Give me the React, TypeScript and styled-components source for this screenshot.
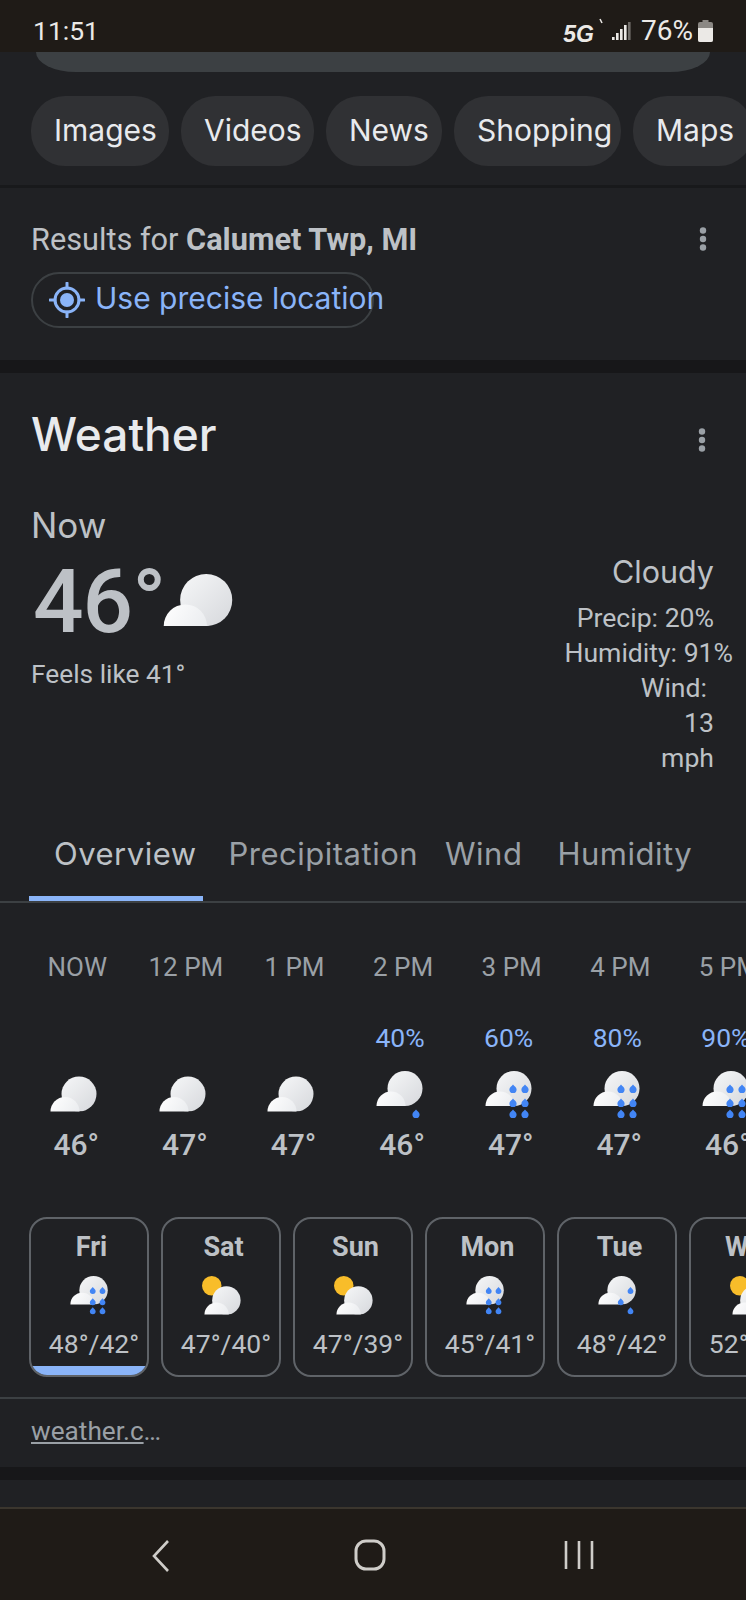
import styled, { createGlobalStyle } from 'styled-components';

type IconKind = 'cloudy' | 'drizzle' | 'showers' | 'rain' | 'partly';

type Hour = { label: string; chance?: string; icon: IconKind; temp: string };
type Day = { name: string; icon: IconKind; temps: string; active?: boolean };

const hours: Hour[] = [
  { label: 'NOW', icon: 'cloudy', temp: '46°' },
  { label: '12 PM', icon: 'cloudy', temp: '47°' },
  { label: '1 PM', icon: 'cloudy', temp: '47°' },
  { label: '2 PM', chance: '40%', icon: 'drizzle', temp: '46°' },
  { label: '3 PM', chance: '60%', icon: 'rain', temp: '47°' },
  { label: '4 PM', chance: '80%', icon: 'rain', temp: '47°' },
  { label: '5 PM', chance: '90%', icon: 'rain', temp: '46°' },
];

const days: Day[] = [
  { name: 'Fri', icon: 'rain', temps: '48°/42°', active: true },
  { name: 'Sat', icon: 'partly', temps: '47°/40°' },
  { name: 'Sun', icon: 'partly', temps: '47°/39°' },
  { name: 'Mon', icon: 'rain', temps: '45°/41°' },
  { name: 'Tue', icon: 'showers', temps: '48°/42°' },
  { name: 'Wed', icon: 'partly', temps: '52°/43°' },
];

const chips = [
  { label: 'Images', width: 138 },
  { label: 'Videos', width: 133 },
  { label: 'News', width: 116 },
  { label: 'Shopping', width: 167 },
  { label: 'Maps', width: 120 },
];

const tabs = [
  { label: 'Overview', gap: 32 },
  { label: 'Precipitation', gap: 27 },
  { label: 'Wind', gap: 35 },
  { label: 'Humidity', gap: 0 },
];

const DISPLAY = '"Inter", "Noto Sans", sans-serif';
const BODY = 'Roboto, "Liberation Sans", sans-serif';

const GlobalStyle = createGlobalStyle`
  html, body {
    margin: 0;
    padding: 0;
    background: #202124;
  }
`;

const Screen = styled.div`
  width: 746px;
  height: 1600px;
  display: flex;
  flex-direction: column;
  overflow: hidden;
  background: #202124;
  font-family: ${BODY};
  color: #bdc1c6;
`;

const StatusBar = styled.div`
  flex: 0 0 52px;
  display: flex;
  align-items: center;
  justify-content: space-between;
  padding: 9px 33px 0 33px;
  box-sizing: border-box;
  background: #1f1b17;
  color: #ebe9e6;
  font-size: 26.5px;
`;

const StatusRight = styled.div`
  display: flex;
  align-items: center;
`;

const FiveG = styled.span`
  font-family: 'Liberation Sans', sans-serif;
  font-weight: 700;
  font-style: italic;
  font-size: 23px;
  margin-right: -3px;
  padding-top: 8px;
`;

const Percent = styled.span`
  margin: 0 5px 0 10px;
  font-size: 28px;
`;

const SearchStub = styled.div`
  height: 20px;
  margin: 0 36px;
  background: #3c4043;
  border-radius: 0 0 40px 40px / 0 0 20px 20px;
`;

const ChipRow = styled.div`
  display: flex;
  gap: 12px;
  padding: 24px 0 19px 31px;
  border-bottom: 3px solid #18191b;
`;

const Chip = styled.div<{ $width: number }>`
  flex: 0 0 ${(p) => p.$width}px;
  height: 70px;
  display: flex;
  align-items: center;
  padding: 0 0 3px 23px;
  box-sizing: border-box;
  background: #303134;
  border-radius: 34px;
  color: #e8eaed;
  font-family: ${DISPLAY};
  font-size: 30px;
`;

const ResultsSection = styled.section`
  height: 172px;
  padding: 33px 31px 0;
  box-sizing: border-box;
`;

const ResultsRow = styled.div`
  display: flex;
  align-items: center;
  justify-content: space-between;
  height: 36px;
  font-size: 30.7px;
  padding-right: 7px;
`;

const Strong = styled.b`
  font-weight: 700;
`;

const LocationPill = styled.div`
  width: 343px;
  height: 56px;
  margin-top: 15px;
  display: flex;
  align-items: center;
  gap: 10px;
  padding: 0 0 5px 16px;
  box-sizing: border-box;
  border: 2px solid #3c4043;
  border-radius: 28px;
  color: #8ab4f8;
  font-family: ${DISPLAY};
  font-size: 30px;
  white-space: nowrap;
`;

const Band = styled.div`
  flex: 0 0 13px;
  background: #171719;
`;

const WeatherCard = styled.section`
  flex: 0 0 1094px;
  padding-top: 33px;
  box-sizing: border-box;
`;

const TitleRow = styled.div`
  display: flex;
  align-items: flex-start;
  justify-content: space-between;
  padding: 0 39px 0 31px;
`;

const Title = styled.h1`
  margin: 0;
  font-family: ${DISPLAY};
  font-weight: 500;
  font-size: 46px;
  line-height: 56px;
  color: #e8eaed;
`;

const TitleMenu = styled.div`
  padding-top: 22px;
`;

const NowLabel = styled.div`
  margin: 43px 0 6px 31px;
  font-family: ${DISPLAY};
  font-size: 35px;
  line-height: 40px;
`;

const Hero = styled.div`
  display: flex;
  justify-content: space-between;
  padding: 0 32px 0 31px;
`;

const TempRow = styled.div`
  display: flex;
  align-items: flex-start;
  height: 100px;
`;

const BigTemp = styled.span`
  font-weight: 500;
  font-size: 89px;
  line-height: 102px;
  letter-spacing: -1px;
  padding-left: 2px;
  color: #bdc1c6;
`;

const HeroIcon = styled.div`
  margin: 22px 0 0 -2px;
`;

const FeelsLike = styled.div`
  margin-top: 6px;
  font-size: 26.3px;
  line-height: 34px;
`;

const Conditions = styled.div`
  display: flex;
  flex-direction: column;
  align-items: flex-end;
  padding-top: 1px;
`;

const ConditionTitle = styled.div`
  font-family: ${DISPLAY};
  font-size: 30.5px;
  line-height: 40px;
  margin-bottom: 8px;
`;

const ConditionLine = styled.div<{ $shift?: number }>`
  font-size: 26.6px;
  line-height: 35px;
  white-space: nowrap;
  margin-right: ${(p) => p.$shift ?? 0}px;
`;

const TabRow = styled.div`
  display: flex;
  height: 67px;
  margin-top: 59px;
  padding-left: 54px;
  border-bottom: 2px solid #3c4043;
`;

const Tab = styled.div<{ $active?: boolean; $gap: number }>`
  position: relative;
  margin-right: ${(p) => p.$gap}px;
  font-family: ${DISPLAY};
  font-size: 31px;
  letter-spacing: 0.5px;
  line-height: 40px;
  white-space: nowrap;
  color: ${(p) => (p.$active ? '#bdc1c6' : '#9aa0a6')};
`;

const TabMarker = styled.div`
  position: absolute;
  left: -25px;
  width: 174px;
  top: 62px;
  height: 5px;
  background: #8ab4f8;
`;

const HourRow = styled.div`
  display: flex;
  padding: 48px 0 0 23px;
`;

const HourCol = styled.div`
  flex: 0 0 108.6px;
  display: flex;
  flex-direction: column;
  align-items: center;
`;

const HourLabel = styled.div`
  font-size: 26px;
  line-height: 32px;
  white-space: nowrap;
  color: #9aa0a6;
`;

const Chance = styled.div`
  height: 32px;
  margin: 39px 6px 17px 0;
  font-size: 26.5px;
  line-height: 32px;
  color: #8ab4f8;
`;

const HourIcon = styled.div`
  height: 48px;
  margin-right: 6px;
`;

const HourTemp = styled.div`
  margin: 8px 2px 0 0;
  font-size: 30px;
  font-weight: 500;
  line-height: 36px;
`;

const DayRow = styled.div`
  display: flex;
  gap: 12px;
  margin-top: 54px;
  padding-left: 29px;
`;

const DayCard = styled.div`
  position: relative;
  flex: 0 0 120px;
  height: 160px;
  display: flex;
  flex-direction: column;
  align-items: center;
  padding-top: 11px;
  box-sizing: border-box;
  overflow: hidden;
  border: 2px solid #5f6368;
  border-radius: 18px;
`;

const DayName = styled.div`
  margin-left: 5px;
  font-size: 27px;
  font-weight: 700;
  line-height: 34px;
`;

const DayIcon = styled.div`
  height: 39px;
  margin-top: 12px;
`;

const DayTemps = styled.div`
  margin: 12px 0 0 10px;
  font-size: 26.5px;
  line-height: 34px;
  white-space: nowrap;
  color: #bdc1c6;
`;

const DayMarker = styled.div`
  position: absolute;
  left: 0;
  right: 0;
  bottom: 0;
  height: 9px;
  background: #8ab4f8;
`;

const SourceRow = styled.div`
  margin-top: 20px;
  padding: 16px 31px 0;
  border-top: 2px solid #3c4043;
  font-size: 26.2px;
  line-height: 32px;
  color: #9aa0a6;
`;

const SourceLink = styled.a`
  color: inherit;
  text-decoration: underline;
`;

const PageStub = styled.div`
  flex: 0 0 27px;
`;

const NavBar = styled.nav`
  flex: 1;
  display: flex;
  align-items: flex-start;
  padding: 30px 0 0 56px;
  box-sizing: border-box;
  background: #1f1b17;
  border-top: 2px solid #3b362e;
`;

const NavSlot = styled.div`
  flex: 0 0 209px;
  display: flex;
  justify-content: center;
`;

const MoreDots = () => (
  <svg width="10" height="24" viewBox="0 0 10 24" style={{ display: 'block' }}>
    <circle cx="5" cy="3.5" r="3.2" fill="#9aa0a6" />
    <circle cx="5" cy="12" r="3.2" fill="#9aa0a6" />
    <circle cx="5" cy="20.5" r="3.2" fill="#9aa0a6" />
  </svg>
);

const SignalIcon = () => (
  <svg width="40" height="30" viewBox="0 0 40 30">
    <path d="M9 3l2 4" stroke="#ebe9e6" strokeWidth="1.6" fill="none" />
    <rect x="21" y="21" width="2.6" height="3" fill="#ebe9e6" />
    <rect x="25" y="17" width="2.6" height="7" fill="#ebe9e6" />
    <rect x="29" y="13" width="2.6" height="11" fill="#ebe9e6" />
    <rect x="33" y="9" width="2.6" height="15" fill="#ebe9e6" />
    <rect x="37" y="6" width="2.6" height="18" fill="#6f6c68" />
  </svg>
);

const BatteryIcon = () => (
  <svg width="15" height="22" viewBox="0 0 15 22">
    <path d="M4.5 0h6v2H13a2 2 0 0 1 2 2v16a2 2 0 0 1-2 2H2a2 2 0 0 1-2-2V4a2 2 0 0 1 2-2h2.5z" fill="#8b8884" />
    <path d="M0 8h15v12a2 2 0 0 1-2 2H2a2 2 0 0 1-2-2z" fill="#ebe9e6" />
  </svg>
);

const LocateIcon = () => (
  <svg width="36" height="36" viewBox="0 0 36 36" style={{ flexShrink: 0, marginTop: 5 }}>
    <circle cx="18" cy="18" r="12" fill="none" stroke="#8ab4f8" strokeWidth="3" />
    <circle cx="18" cy="18" r="7" fill="#8ab4f8" />
    <path d="M18 1v5M18 30v5M1 18h5M30 18h5" stroke="#8ab4f8" strokeWidth="3" strokeLinecap="round" />
  </svg>
);

// teardrop centred on (x, y)
const Drop = ({ x, y }: { x: number; y: number }) => (
  <path
    d={`M${x} ${y - 4.6}c1.2 1.6 3.6 3 3.6 5a3.6 3.6 0 0 1-7.2 0c0-2 2.4-3.4 3.6-5z`}
    fill="#4285f4"
  />
);

const dropSets: Record<IconKind, [number, number][]> = {
  cloudy: [],
  partly: [],
  drizzle: [[40, 43]],
  showers: [[40, 18], [28, 32], [40, 43]],
  rain: [[28, 18], [40, 18], [28, 32], [40, 32], [28, 43], [40, 43]],
};

type WeatherIconProps = {
  kind: IconKind;
  id: string;
  width: number;
  height: number;
  viewBox?: string;
};

// Cloud pair, with an optional sun behind and rain drops in front
const WeatherIcon = ({ kind, id, width, height, viewBox = '0 0 48 48' }: WeatherIconProps) => {
  const partly = kind === 'partly';
  const dy = kind === 'cloudy' ? 5.5 : 0;
  const big = partly ? { cx: 30, cy: 30, r: 17.5 } : { cx: 29, cy: 17.5 + dy, r: 17.5 };
  const small = partly ? { cx: 18, cy: 47.5, r: 15 } : { cx: 15, cy: 35 + dy, r: 14.5 };
  const base = partly ? 47.5 : 35 + dy;
  return (
    <svg width={width} height={height} viewBox={viewBox} style={{ display: 'block' }}>
      <defs>
        <linearGradient id={`${id}-big`} x1="0" y1="0" x2="1" y2="1">
          <stop offset="0" stopColor="#f6f7f8" />
          <stop offset="1" stopColor="#d6d8dc" />
        </linearGradient>
        <linearGradient id={`${id}-small`} x1="0" y1="0" x2="1" y2="0.6">
          <stop offset="0" stopColor="#ffffff" />
          <stop offset="1" stopColor="#e9ebee" />
        </linearGradient>
        <clipPath id={`${id}-clip`}>
          <rect x="0" y="0" width="48" height={base} />
        </clipPath>
      </defs>
      {partly && <circle cx="12" cy="12" r="12" fill="#f8bd2a" />}
      <g clipPath={`url(#${id}-clip)`}>
        <circle {...big} fill={`url(#${id}-big)`} />
        <circle {...small} fill={`url(#${id}-small)`} />
      </g>
      {dropSets[kind].map(([x, y]) => (
        <Drop key={`${x}-${y}`} x={x} y={y} />
      ))}
    </svg>
  );
};

const App = () => (
  <>
    <GlobalStyle />
    <Screen>
      <StatusBar>
        <span>11:51</span>
        <StatusRight>
          <FiveG>5G</FiveG>
          <SignalIcon />
          <Percent>76%</Percent>
          <BatteryIcon />
        </StatusRight>
      </StatusBar>

      <SearchStub />
      <ChipRow>
        {chips.map((chip) => (
          <Chip key={chip.label} $width={chip.width}>
            {chip.label}
          </Chip>
        ))}
      </ChipRow>

      <ResultsSection>
        <ResultsRow>
          <span>
            Results for <Strong>Calumet Twp, MI</Strong>
          </span>
          <MoreDots />
        </ResultsRow>
        <LocationPill>
          <LocateIcon />
          Use precise location
        </LocationPill>
      </ResultsSection>
      <Band />

      <WeatherCard>
        <TitleRow>
          <Title>Weather</Title>
          <TitleMenu>
            <MoreDots />
          </TitleMenu>
        </TitleRow>
        <NowLabel>Now</NowLabel>
        <Hero>
          <div>
            <TempRow>
              <BigTemp>46°</BigTemp>
              <HeroIcon>
                <WeatherIcon kind="cloudy" id="hero" width={70} height={54} viewBox="0 5 47 36" />
              </HeroIcon>
            </TempRow>
            <FeelsLike>Feels like 41°</FeelsLike>
          </div>
          <Conditions>
            <ConditionTitle>Cloudy</ConditionTitle>
            <ConditionLine>Precip: 20%</ConditionLine>
            <ConditionLine $shift={-19}>Humidity: 91%</ConditionLine>
            <ConditionLine $shift={7}>Wind:</ConditionLine>
            <ConditionLine>13</ConditionLine>
            <ConditionLine>mph</ConditionLine>
          </Conditions>
        </Hero>

        <TabRow>
          {tabs.map((tab, i) => (
            <Tab key={tab.label} $active={i === 0} $gap={tab.gap}>
              {tab.label}
              {i === 0 && <TabMarker />}
            </Tab>
          ))}
        </TabRow>

        <HourRow>
          {hours.map((hour) => (
            <HourCol key={hour.label}>
              <HourLabel>{hour.label}</HourLabel>
              <Chance>{hour.chance}</Chance>
              <HourIcon>
                <WeatherIcon
                  kind={hour.icon}
                  id={`hour-${hour.label.replace(' ', '')}`}
                  width={48}
                  height={48}
                />
              </HourIcon>
              <HourTemp>{hour.temp}</HourTemp>
            </HourCol>
          ))}
        </HourRow>

        <DayRow>
          {days.map((day) => (
            <DayCard key={day.name}>
              <DayName>{day.name}</DayName>
              <DayIcon>
                <WeatherIcon kind={day.icon} id={`day-${day.name}`} width={39} height={39} />
              </DayIcon>
              <DayTemps>{day.temps}</DayTemps>
              {day.active && <DayMarker />}
            </DayCard>
          ))}
        </DayRow>

        <SourceRow>
          <SourceLink>weather.c</SourceLink>…
        </SourceRow>
      </WeatherCard>
      <Band />
      <PageStub />

      <NavBar>
        <NavSlot>
          <svg width="20" height="34" viewBox="0 0 20 34">
            <path d="M17 2L3 17l14 15" fill="none" stroke="#cfcdc9" strokeWidth="2.6" />
          </svg>
        </NavSlot>
        <NavSlot>
          <svg width="32" height="32" viewBox="0 0 32 32">
            <rect x="2" y="2" width="28" height="28" rx="10" fill="none" stroke="#cfcdc9" strokeWidth="3" />
          </svg>
        </NavSlot>
        <NavSlot>
          <svg width="30" height="32" viewBox="0 0 30 32">
            <path d="M2 2v28M15 2v28M28 2v28" fill="none" stroke="#cfcdc9" strokeWidth="2.6" />
          </svg>
        </NavSlot>
      </NavBar>
    </Screen>
  </>
);

export default App;
